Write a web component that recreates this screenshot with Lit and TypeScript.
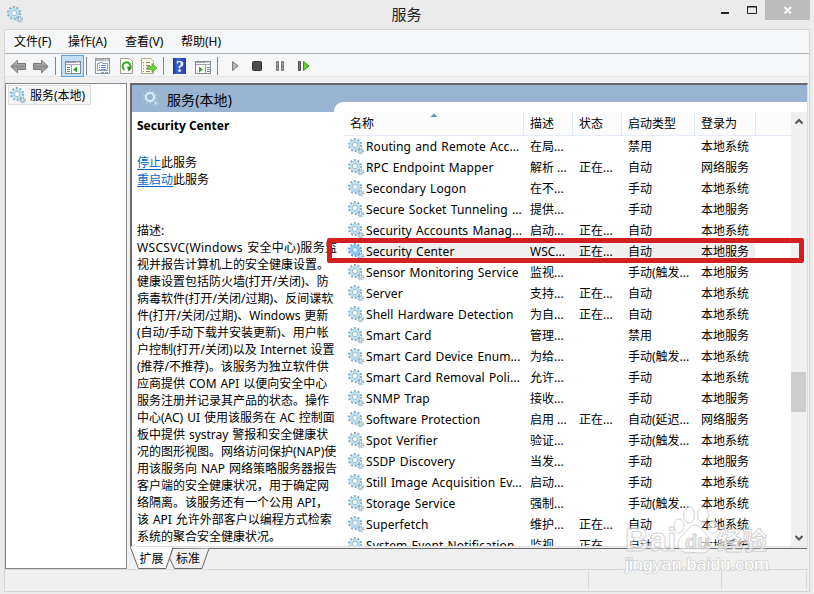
import { LitElement, html, css, svg } from "lit";
import { customElement, property } from "lit/decorators.js";
import { classMap } from "lit/directives/class-map.js";

@customElement("gear-icon")
class GearIcon extends LitElement {
  @property({ type: Boolean }) selected = false;
  @property({ type: Boolean }) pale = false;
  static styles = css`
    :host { display: block; width: 16px; height: 17px; flex: none; }
    svg { display: block; }
    .teeth { fill: none; stroke: #86a9be; stroke-width: 2; stroke-dasharray: 1.9 1.87; }
    .small { stroke: #8aaabd; stroke-width: 1.6; stroke-dasharray: 1.1 .94; }
    .rim { fill: #9cc3d8; }
    .ring { fill: #fff; stroke: #bde2f2; stroke-width: 2.2; }
    .edge { fill: none; stroke: #789fb6; stroke-width: .7; }
    .sel .ring { stroke: #8ccbfa; fill: #e4f2ff; }
    .sel .teeth, .sel .edge { stroke: #5a9bd8; }
    .sel .rim { fill: #6fb0ea; }
    .pale .teeth { stroke: #b0cde0; }
    .pale .rim { fill: #a9cbe0; }
    .pale .ring { fill: #99b4d1; stroke: #d8f0fa; }
    .pale .edge { stroke: #86aac6; }
  `;
  render() {
    return html`<svg class=${classMap({ sel: this.selected, pale: this.pale })} width="16" height="17" viewBox="0 0 16 17">
      <circle class="teeth" cx="7" cy="7" r="6"></circle>
      <circle class="rim" cx="7" cy="7" r="5.3"></circle>
      <circle class="ring" cx="7" cy="7" r="3.8"></circle>
      <circle class="edge" cx="7" cy="7" r="2.6"></circle>
      <circle class="teeth small" cx="12.6" cy="13" r="2.6"></circle>
      <circle cx="12.6" cy="13" r="1.6" fill="#d5e8f2" stroke="#9dbdd0" stroke-width="1"></circle>
    </svg>`;
  }
}

type Row = [string, string, string, string, string];
const SYS = "本地系统", LOC = "本地服务", NET = "网络服务";
const RUN = "正在...", TRIG = "手动(触发...";
const ROWS: Row[] = [
  ["Routing and Remote Acc...", "在局...", "", "禁用", SYS],
  ["RPC Endpoint Mapper", "解析 ...", RUN, "自动", NET],
  ["Secondary Logon", "在不...", "", "手动", SYS],
  ["Secure Socket Tunneling ...", "提供...", "", "手动", LOC],
  ["Security Accounts Manag...", "启动...", RUN, "自动", SYS],
  ["Security Center", "WSC...", RUN, "自动", LOC],
  ["Sensor Monitoring Service", "监视...", "", TRIG, LOC],
  ["Server", "支持...", RUN, "自动", SYS],
  ["Shell Hardware Detection", "为自...", RUN, "自动", SYS],
  ["Smart Card", "管理...", "", "禁用", LOC],
  ["Smart Card Device Enum...", "为给...", "", TRIG, SYS],
  ["Smart Card Removal Poli...", "允许...", "", "手动", SYS],
  ["SNMP Trap", "接收...", "", "手动", LOC],
  ["Software Protection", "启用 ...", RUN, "自动(延迟...", NET],
  ["Spot Verifier", "验证...", "", TRIG, SYS],
  ["SSDP Discovery", "当发...", "", "手动", LOC],
  ["Still Image Acquisition Ev...", "启动...", "", "手动", SYS],
  ["Storage Service", "强制...", "", TRIG, SYS],
  ["Superfetch", "维护...", RUN, "自动", SYS],
  ["System Event Notification...", "监视...", RUN, "自动", SYS],
];
const DESCRIPTION = [
  "WSCSVC(Windows 安全中心)服务监",
  "视并报告计算机上的安全健康设置。",
  "健康设置包括防火墙(打开/关闭)、防",
  "病毒软件(打开/关闭/过期)、反间谍软",
  "件(打开/关闭/过期)、Windows 更新",
  "(自动/手动下载并安装更新)、用户帐",
  "户控制(打开/关闭)以及 Internet 设置",
  "(推荐/不推荐)。该服务为独立软件供",
  "应商提供 COM API 以便向安全中心",
  "服务注册并记录其产品的状态。操作",
  "中心(AC) UI 使用该服务在 AC 控制面",
  "板中提供 systray 警报和安全健康状",
  "况的图形视图。网络访问保护(NAP)使",
  "用该服务向 NAP 网络策略服务器报告",
  "客户端的安全健康状况，用于确定网",
  "络隔离。该服务还有一个公用 API，",
  "该 API 允许外部客户以编程方式检索",
  "系统的聚合安全健康状况。",
];

const arrow = svg`<path d="M.8 7.500 7.500 1.200V4.500h8v6h-8v3.300Z" fill="url(#ag)" stroke="#777"/>`;

@customElement("app-root")
class AppRoot extends LitElement {
  static styles = css`
    :host { display: block; width: 814px; height: 594px; overflow: hidden; position: relative;
      background: #ebebeb; color: #000; font: 12px/17px "Noto Sans", "Noto Sans CJK SC", sans-serif; }
    * { box-sizing: border-box; }
    svg { display: block; flex: none; }
    .window { height: 594px; display: flex; flex-direction: column; padding: 0 4px 2px; }
    .title { height: 29px; display: flex; align-items: flex-start; flex: none; }
    .title gear-icon { margin: 6px 0 0 3px; }
    .title h1 { flex: 1; margin: 4px 0 0 70px; text-align: center; font: 15px/20px "Noto Sans CJK SC", sans-serif; color: #222; }
    .controls { display: flex; width: 90px; height: 20px; }
    .frame { flex: 1; border: 1px solid #d5d5d5; background: #f0f0f0; display: flex; flex-direction: column; min-height: 0; }
    .menu { height: 24px; border-bottom: 1px solid #b0b4b8; background: #f5f6f7; display: flex; align-items: center; gap: 15px; padding-left: 9px; flex: none; }
    .menu span { white-space: nowrap; width: 39px; }
    .menu .m1 { width: 42px; }
    .menu .m2 { width: 41px; }
    .tools { height: 23px; border-bottom: 1px solid #e3e4e5; background: #f5f6f7; flex: none; }
    .body { height: 492px; padding: 6px 1px 0 0; display: flex; gap: 3px; flex: none; }
    .tree { width: 122px; height: 486px; border: 1px solid #828790; background: #fff; padding: 1px 0 0 2px; }
    .node { display: flex; height: 20px; width: 83px; background: #f6f6f6; border: 1px solid #dcdcdc; gap: 4px; padding: 1px 0 0 1px; white-space: nowrap; }
    .right { flex: 1; display: flex; flex-direction: column; min-width: 0; }
    .pane { height: 464px; border: 2px solid #696969; border-right: 1px solid #dcdcdc; border-bottom: 1px solid #e3e3e3; background: #fff; display: flex; flex-direction: column; overflow: hidden; }
    .banner { height: 27px; background: #99b4d1; display: flex; align-items: flex-start; justify-content: space-between; flex: none; }
    .banner .label { display: flex; font-size: 14px; line-height: 20px; gap: 8px; padding: 5px 0 0 11px; }
    .banner .label span { letter-spacing: .1px; }
    .notch { align-self: flex-end; width: 473px; height: 10px; background: #fff; border-top-left-radius: 9px; }
    .cols { display: flex; flex: 1; min-height: 0; }
    .info { width: 212px; padding: 5px 0 0 5px; white-space: nowrap; flex: none; }
    .info b { display: block; height: 37px; }
    .info a { color: #0066cc; text-decoration: underline; text-underline-offset: 2px; }
    .links { height: 68px; }
    .line { word-spacing: .8px; }
    .line.wide { letter-spacing: .32px; }
    .list { width: 447px; display: flex; flex-direction: column; overflow: hidden; flex: none; }
    .head { height: 24px; flex: none; display: flex; background: #fcfcfc; border-bottom: 1px solid #e3ecf8; line-height: 23px; }
    .head span { border-right: 1px solid #dfeaf8; padding-left: 6px; white-space: nowrap; }
    .row { height: 21px; flex: none; display: flex; line-height: 21px; white-space: nowrap; }
    .row gear-icon { margin: 2px 0 0 4px; }
    .row .fill { display: flex; }
    .row.on .fill { background: #f0f0f0; }
    .row .fill span { padding-left: 7px; }
    .row .fill .name { width: 159px; padding-left: 2px; letter-spacing: .1px; word-spacing: 1px; }
    .desc { width: 49px; } .stat { width: 49px; } .kind { width: 73px; } .user { width: 61px; }
    .head .c0 { width: 180px; }
    .scroll { width: 16px; background: #f0f0f0; display: flex; flex-direction: column; align-items: center; }
    .scroll .up { margin-top: 5px; }
    .thumb { width: 15px; height: 40px; background: #cdcdcd; margin: 245px 1px 0 0; }
    .scroll .down { margin-top: 121px; }
    .tabs { height: 22px; display: flex; flex: none; }
    .status { flex: 1; border-top: 1px solid #d7d7d7; display: flex; justify-content: flex-end; padding: 1px 2px 2px 0; }
    .cell { border-left: 1px solid #d7d7d7; width: 133px; }
    .cell.last { width: 86px; border-right: 1px solid #d7d7d7; }
    .sort { position: absolute; left: 430px; top: 113px; }
    .marker { position: absolute; left: 327px; top: 238px; width: 477px; height: 25px; border: 5px solid #d22020; border-radius: 2px; }
    .mark { position: absolute; left: 620px; top: 500px; }
    .t { font-family: "Noto Sans CJK SC", sans-serif; font-size: 12px; }
  `;

  private tools() {
    return html`<svg width="330" height="23" viewBox="5 54 330 23">
      <defs>
        <linearGradient id="ag" x2="0" y2="1"><stop stop-color="#d0d0d0"/><stop offset=".5" stop-color="#8e8e8e"/><stop offset="1" stop-color="#b8b8b8"/></linearGradient>
        <linearGradient id="hg" x2="1" y2="0"><stop stop-color="#20308c"/><stop offset=".3" stop-color="#3c63d0"/><stop offset="1" stop-color="#243fae"/></linearGradient>
      </defs>
      <g transform="translate(10 59)">${arrow}</g>
      <g transform="translate(49 59) scale(-1 1)">${arrow}</g>
      <path d="M55.500 57v18M86.500 57v18M163.500 57v18M217.500 57v18" stroke="#858585"/>
      <rect x="61.500" y="55.500" width="22" height="21" fill="#c2dff8" stroke="#5ea3e3"/>
      <rect x="65.500" y="61.500" width="15" height="12" fill="#fff" stroke="#858b92"/>
      <path d="M66 62.500h14M66 64.500h14" stroke="#a3a9b0" fill="none"/><path d="M76 62.500h1m1 0h1" stroke="#fff"/>
      <path d="M71.500 65v8" stroke="#9aa0a8"/><path d="M67 67.500h3M67 69.500h3M67 71.500h3" stroke="#69839d"/>
      <path d="M77 66.500v6l-4-3Z" fill="#35a82c"/>
      <rect x="95.500" y="58.500" width="14" height="15" fill="#f8f8f8" stroke="#999"/>
      <path d="M96 60h13" stroke="#adb5bf" stroke-width="2"/><path d="M104 60h1m1 0h1" stroke="#fff"/>
      <path d="M97.500 63.500h2v-1h3v1h5v7h-10Z" fill="#fff" stroke="#8aa0b6"/>
      <path d="M99 65.500h1m1 0h5m-7 2h1m1 0h5m-7 2h1m1 0h5" stroke="#4d96d8"/>
      <path d="M101 72.500h3m1 0h3" stroke="#6fa3cf"/>
      <path d="M120.500 58.500h9l3 3v12h-12Z" fill="#fffef4" stroke="#a09d91"/>
      <path d="M124.500 69.800a4 4 0 1 1 5.200-1" fill="none" stroke="#37aa30" stroke-width="2"/><path d="M127 66.500l5 1-3.500 4Z" fill="#278a22"/>
      <path d="M141.500 58.500h9l3 3v12h-12Z" fill="#fffbea" stroke="#b4ad90"/>
      <path d="M143 62.500h1m2 0h4m-7 3h1m2 0h4m-7 3h1m2 0h4m-7 3h1m2 0h4" stroke="#8f8c7b"/>
      <path d="M147.500 66.500h4.500V63.500l5 4.500-5 4.500v-3h-4.500Z" fill="#70cc42" stroke="#43a52a" stroke-width=".7"/>
      <rect x="173" y="58" width="13" height="16" fill="url(#hg)"/>
      <text x="180" y="72" text-anchor="middle" font-family="Liberation Serif" font-weight="bold" font-size="16" fill="#fff">?</text>
      <rect x="195.500" y="61.500" width="15" height="12" fill="#fff" stroke="#858b92"/>
      <path d="M196 62.500h14M196 64.500h14" stroke="#a3a9b0"/><path d="M206 62.500h1m1 0h1" stroke="#fff"/>
      <path d="M205.500 65v8" stroke="#9aa0a8"/><path d="M207 67.500h3M207 69.500h3M207 71.500h3" stroke="#69839d"/><path d="M199 66.500v6l4-3Z" fill="#35a82c"/>
      <path d="M232.500 61.500v9l5.500-4.500Z" fill="#b7b7b7" stroke="#777"/>
      <rect x="252.500" y="61.500" width="9" height="9" rx="1" fill="#4c4c4c" stroke="#333"/>
      <path d="M276.500 61.500h2v9h-2ZM281.500 61.500h2v9h-2Z" fill="#999" stroke="#7b7b7b"/>
      <path d="M298.500 61.500h2v9h-2Z" fill="#777" stroke="#505050"/>
      <path d="M303.500 61.500v9l5.500-4.500Z" fill="#5ed52f" stroke="#28991a"/>
    </svg>`;
  }

  render() {
    return html`<div class="window">
      <div class="title"><gear-icon></gear-icon><h1>服务</h1>
        <svg class="controls" width="90" height="20" viewBox="720 0 90 20">
          <rect x="765" width="45" height="20" fill="#bcbcbc"/>
          <path d="M721 13h8" stroke="#222" stroke-width="2"/>
          <path d="M747.500 6.500h9v7h-9ZM747 7h10" stroke="#222" fill="none"/>
          <path d="m784.500 7 6.500 6.500m0-6.500-6.500 6.500" stroke="#fff" stroke-width="1.800"/>
        </svg></div>
      <div class="frame">
        <div class="menu"><span>文件(F)</span><span class="m1">操作(A)</span><span class="m2">查看(V)</span><span>帮助(H)</span></div>
        <div class="tools">${this.tools()}</div>
        <div class="body">
          <div class="tree"><div class="node"><gear-icon></gear-icon><span>服务(本地)</span></div></div>
          <div class="right">
            <div class="pane">
              <div class="banner"><div class="label"><gear-icon pale></gear-icon><span>服务(本地)</span></div><div class="notch"></div></div>
              <div class="cols">
                <div class="info"><b>Security Center</b>
                  <div class="links"><a>停止</a>此服务<br><a>重启动</a>此服务</div>
                  <div>描述:</div>${DESCRIPTION.map((l, i) => html`<div class=${classMap({ line: true, wide: i === 0 })}>${l}</div>`)}
                </div>
                <div class="list">
                  <div class="head"><span class="c0">名称</span><span class="desc">描述</span><span class="stat">状态</span><span class="kind">启动类型</span><span class="user">登录为</span></div>
                  ${ROWS.map((r) => html`<div class=${classMap({ row: true, on: r[0] === "Security Center" })}>
                    <gear-icon ?selected=${r[0] === "Security Center"}></gear-icon>
                    <div class="fill"><span class="name">${r[0]}</span><span class="desc">${r[1]}</span><span class="stat">${r[2]}</span><span class="kind">${r[3]}</span><span class="user">${r[4]}</span></div></div>`)}
                </div>
                <div class="scroll">
                  <svg class="up" width="10" height="10" viewBox="0 0 10 10"><path d="m1.500 6.500 3.500-3.500 3.500 3.500" fill="none" stroke="#555" stroke-width="2"/></svg>
                  <div class="thumb"></div>
                  <svg class="down" width="10" height="10" viewBox="0 0 10 10"><path d="m1.500 3 3.500 3.500 3.500-3.500" fill="none" stroke="#555" stroke-width="2"/></svg>
                </div>
              </div>
            </div>
            <svg class="tabs" width="677" height="22" viewBox="130 547 677 22">
              <path d="M171 548.500h636" stroke="#696969"/>
              <path d="m172.500 549-3 9 5 10.500h27.500l7-20" fill="#f0f0f0" stroke="#696969"/>
              <path d="M130.500 547.500 138.500 568.500h27.500l7-21" fill="#fff" stroke="#696969"/>
              <path d="M131 547.500h41" stroke="#fff" stroke-width="2"/>
              <text class="t" x="139.500" y="563">扩展</text><text class="t" x="176" y="563">标准</text>
            </svg>
          </div>
        </div>
        <div class="status"><div class="cell"></div><div class="cell last"></div></div>
      </div>
    </div>
    <svg class="sort" width="8" height="4" viewBox="0 0 8 4"><path d="M.5 4 4 .5 7.500 4Z" fill="#5c94b3"/></svg>
    <div class="marker"></div>
    <svg class="mark" width="160" height="82" viewBox="620 500 160 82">
      <g fill="#fff" fill-opacity=".6" stroke="#c4c4c4" stroke-opacity=".75">
        <ellipse cx="679" cy="526" rx="5" ry="7"/><ellipse cx="689" cy="515" rx="5.500" ry="8"/><ellipse cx="703" cy="515" rx="5.500" ry="8"/><ellipse cx="713" cy="527" rx="5" ry="6.500"/>
        <path d="M695 525c5 0 8 6 12 10 5 5 7 17-5 18-5 0-9-1-14 0-12-1-12-13-5-18 5-5 7-10 12-10Z"/>
        <text x="625" y="551" font-family="Liberation Sans" font-weight="bold" font-size="33">Bai</text>
        <text x="685" y="549" font-family="Liberation Sans" font-weight="bold" font-size="20" fill="#ddd">du</text>
        <text x="717" y="550" font-family="Noto Sans CJK SC" font-weight="bold" font-size="25">经验</text>
      </g>
      <text x="625" y="570" font-family="Liberation Sans" font-size="17" textLength="144" lengthAdjust="spacingAndGlyphs" fill="#fff" stroke="#d0d0d0" stroke-width="1.600" paint-order="stroke">jingyan.baidu.com</text>
    </svg>`;
  }
}
